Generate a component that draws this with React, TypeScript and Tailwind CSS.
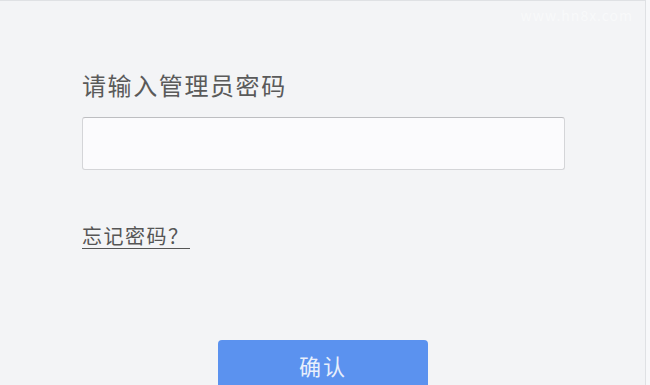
export default function App() {
  const font = { fontFamily: '"Noto Sans CJK SC", "Noto Sans", sans-serif' };
  return (
    <div className="h-[385px] w-[650px] overflow-hidden bg-[#f7f8fa]" style={font}>
      <div className="relative flex h-[390px] w-[646px] flex-col items-start border-t border-r border-[#dfe1e4] bg-[#f3f4f6] pl-[82px] pt-[69px]">
        <span className="pointer-events-none absolute right-[12px] top-[4px] text-[14px] text-[#f8f9fa] tracking-[1px]">www.hn8x.com</span>
        <div className="shrink-0 text-[24px] leading-[30px] tracking-[1.6px] text-[#5a5a5a]">请输入管理员密码</div>
        <div className="mt-[17px] h-[53px] w-[483px] shrink-0 rounded-[3px] border border-[#d4d5d8] border-t-[#bdbec1] bg-[#fbfbfd]" />
        <a className="mt-[54px] inline-block shrink-0 border-b border-[#555] text-[20px] leading-[24px] tracking-[1.5px] text-[#555]">
          忘记密码？
        </a>
        <button className="ml-[136px] mt-[91px] flex h-[60px] w-[210px] shrink-0 items-start justify-center rounded-[4px] bg-[#5b92ef] pt-[11px] text-[22px] leading-[28px] tracking-[2px] text-[#e8effc]">
          确认
        </button>
      </div>
    </div>
  );
}
